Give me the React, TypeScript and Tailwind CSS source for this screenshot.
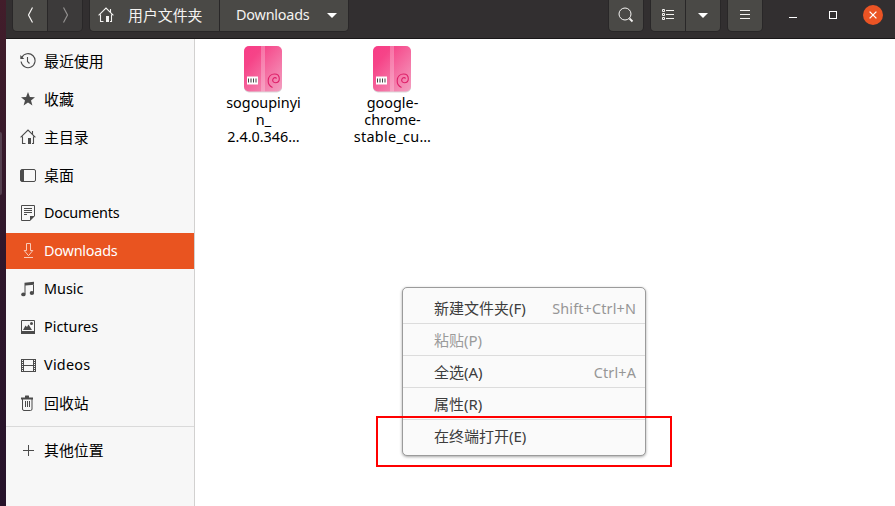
import React from "react";

const font = "font-['Noto_Sans','Noto_Sans_CJK_SC',sans-serif]";

function Svg({ children, className = "" }: { children: React.ReactNode; className?: string }) {
  return (
    <svg width="16" height="16" viewBox="0 0 16 16" fill="none" stroke="currentColor" className={`shrink-0 ${className}`}>
      {children}
    </svg>
  );
}

const HomeIcon = () => (
  <Svg>
    <path d="M.6 8.4 8 1l7.400 7.400M2.500 7.500v7h3M13.500 7.500v7h-1.500M12.500 2v3" strokeWidth="1.100" />
    <path d="M8 9h3v6H8z" fill="currentColor" stroke="none" />
  </Svg>
);
const RecentIcon = () => (
  <Svg>
    <path d="M1.800 4.500A7 7 0 1 1 1.100 8.500M7.500 4v4.500l2 2" strokeWidth="1.100" />
    <path d="M.3 2v4h4z" fill="currentColor" stroke="none" />
  </Svg>
);
const StarIcon = () => (
  <Svg>
    <path d="m8 1 1.900 5 5.100.2-4 3.200 1.400 5L8 11.600l-4.400 2.800 1.400-5-4-3.200L6.100 6z" fill="currentColor" stroke="none" />
  </Svg>
);
const DesktopIcon = () => (
  <Svg>
    <rect x=".5" y="2.500" width="15" height="12" rx="1.500" />
    <path d="M1 3h3v11H1z" fill="currentColor" stroke="none" />
  </Svg>
);
const DocumentIcon = () => (
  <Svg>
    <path d="M10 15.500H1.500v-15h13V11M4 3.500h8M4 5.500h8M4 7.500h8M4 9.500h3" />
    <path d="M10 16v-5h5z" fill="currentColor" stroke="none" />
  </Svg>
);
const DownloadIcon = () => (
  <Svg>
    <path d="M6.500.5h4v7h2.300L8.500 12.700 4.200 7.500h2.300zM4 14.500h9" />
  </Svg>
);
const MusicIcon = () => (
  <Svg>
    <g fill="currentColor" stroke="none">
      <path d="M4.500 1.800 14 .7v3L5.500 4.500V13h-1zM13 2h1v9.500h-1z" />
      <ellipse cx="3.400" cy="13.400" rx="2.200" ry="1.900" />
      <ellipse cx="11.900" cy="12" rx="2.200" ry="1.900" />
    </g>
  </Svg>
);
const PictureIcon = () => (
  <Svg>
    <path d="M1.500 1.500h13v13h-13z" />
    <path d="M1 12h14v3H1zM3 11l2.500-4.500L7 8l1.500-2.500L12 11z" fill="currentColor" stroke="none" />
    <circle cx="11.500" cy="4.500" r="1.500" fill="currentColor" stroke="none" />
  </Svg>
);
const VideoIcon = () => (
  <Svg>
    <path d="M1.500 2v13M3.500 2v13M13.500 2v13M15.500 2v13" />
    <path d="M2.500 2v13M14.500 2v13" strokeDasharray="1 1" />
    <path d="M3.500 2.500h10M3.500 8.500h10M3.500 14.500h10" />
  </Svg>
);
const TrashIcon = () => (
  <Svg>
    <path d="M1 2.500h4V1q0-.5.5-.5h3q.5 0 .5.500v1.500h4v2H1z" fill="currentColor" stroke="none" />
    <path d="M2.500 4v10q0 1.500 1.500 1.500h6.500q1.500 0 1.500-1.500V4M5.500 6v6M7.500 6v6M9.500 6v6" />
  </Svg>
);
const PlusIcon = () => (
  <Svg>
    <path d="M8.500 3v11M3 8.500h11" />
  </Svg>
);
const DownArrow = () => (
  <svg width="10" height="5" viewBox="0 0 10 5" className="shrink-0">
    <path d="M0 0h10L5 5z" fill="#fff" />
  </svg>
);

const places = [
  { label: "最近使用", icon: <RecentIcon /> },
  { label: "收藏", icon: <StarIcon /> },
  { label: "主目录", icon: <HomeIcon /> },
  { label: "桌面", icon: <DesktopIcon /> },
  { label: "Documents", icon: <DocumentIcon /> },
  { label: "Downloads", icon: <DownloadIcon />, active: true },
  { label: "Music", icon: <MusicIcon /> },
  { label: "Pictures", icon: <PictureIcon /> },
  { label: "Videos", icon: <VideoIcon /> },
  { label: "回收站", icon: <TrashIcon /> },
];

const spacing: Record<string, string> = {
  Documents: "tracking-[-0.25px]",
  Downloads: "tracking-[-0.2px]",
  Videos: "tracking-[0.25px]",
};

const headButton = "flex items-center justify-center h-[31px] pb-px";

function Header() {
  return (
    <header className="flex h-[39px] shrink-0 items-start border-b border-[#191718] bg-[#322f30] pl-[7px] text-[#f4f3f1]">
      <div className="flex overflow-hidden rounded-b-[4px] shadow-[0_0_0_1px_#292728]">
        <button className={`${headButton} w-[35px] border-r border-[#292728] bg-[#4a4946]`}>
          <Svg><path d="M10.500.5 6.500 8l4 7.500" strokeWidth="1.200" /></Svg>
        </button>
        <button className={`${headButton} w-[34px] bg-[#3c3a3a] text-[#92908f]`}>
          <Svg><path d="m6.500.5 4 7.500-4 7.500" strokeWidth="1.200" /></Svg>
        </button>
      </div>
      <div className="ml-2 flex overflow-hidden rounded-b-[4px] text-[14.900px] shadow-[0_0_0_1px_#292728]">
        <button className="flex h-[31px] w-[130px] items-center border-r border-[#292728] bg-[#4a4946] pb-px pl-2">
          <HomeIcon />
          <span className="ml-[14px]">用户文件夹</span>
        </button>
        <button className="flex h-[31px] w-[128px] items-center bg-[#4a4946] pb-px pl-4">
          <span className="w-[91px] text-left text-[14.400px] tracking-[-0.2px]">Downloads</span>
          <DownArrow />
        </button>
      </div>
      <div className="ml-auto flex">
        <button className={`${headButton} w-[34px] rounded-b-[4px] bg-[#4a4946] shadow-[0_0_0_1px_#292728]`}>
          <Svg><circle cx="7" cy="7" r="6" /><path d="m11.500 11.500 3 3" strokeWidth="1.800" /></Svg>
        </button>
        <div className="ml-2 flex overflow-hidden rounded-b-[4px] shadow-[0_0_0_1px_#292728]">
          <button className={`${headButton} w-[35px] border-r border-[#292728] bg-[#4a4946]`}>
            <Svg><path d="M2.500 2.500h2v2h-2zM2.500 6.500h2v2h-2zM2.500 10.500h2v2h-2zM6 3.500h8M6 7.500h8M6 11.500h8" /></Svg>
          </button>
          <button className={`${headButton} w-[34px] bg-[#4a4946]`}><DownArrow /></button>
        </div>
        <button className={`${headButton} ml-2 w-[34px] rounded-b-[4px] bg-[#4a4946] shadow-[0_0_0_1px_#292728]`}>
          <Svg><path d="M3 3.500h10M3 7.500h10M3 11.500h10" /></Svg>
        </button>
      </div>
      <div className="flex h-[30px] w-[133px] shrink-0 items-center pl-[27px]">
        <div className="mt-[5px] h-px w-2 bg-white" />
        <div className="ml-8 size-2 border border-white" />
        <div className="ml-[26px] flex size-5 items-center justify-center rounded-full bg-[#eb5424] text-white">
          <svg width="8" height="8" viewBox="0 0 8 8"><path d="m.6.6 6.800 6.800m0-6.800L.6 7.400" stroke="currentColor" strokeWidth="1.300" /></svg>
        </div>
      </div>
    </header>
  );
}

function Sidebar() {
  return (
    <aside className="w-[189px] shrink-0 border-r border-[#d2d1d0] bg-[#f7f7f7] pt-[4px] text-[14.900px] text-black">
      <ul className="flex flex-col gap-[2px]">
        {places.map((p) => (
          <li key={p.label} className={`flex h-[36px] items-center pl-[14px] ${p.active ? "bg-[#e95420] text-white" : ""}`}>
            <span className={p.active ? "text-[#f8cbb9]" : "text-[#4b4b4b]"}>{p.icon}</span>
            <span className={`ml-2 ${/[A-Z]/.test(p.label) ? "text-[14.400px]" : ""} ${spacing[p.label] ?? ""}`}>{p.label}</span>
          </li>
        ))}
      </ul>
      <div className="mt-[5px] h-px bg-[#dadada]" />
      <div className="mt-[5px] flex h-[36px] items-center pl-[14px]">
        <span className="text-[#4b4b4b]"><PlusIcon /></span>
        <span className="ml-2">其他位置</span>
      </div>
    </aside>
  );
}

function PackageFile({ lines }: { lines: string[] }) {
  return (
    <div className="flex w-[129px] flex-col items-center">
      <svg width="40" height="48" viewBox="0 0 40 48" className="-ml-[2px]">
        <defs>
          <linearGradient id="box" x1="0" y1="0" x2="1" y2="1">
            <stop offset="0" stopColor="#f83c86" />
            <stop offset=".25" stopColor="#f64488" />
            <stop offset="1" stopColor="#f3a0c1" />
          </linearGradient>
        </defs>
        <rect x="1" y="2" width="38" height="45.500" rx="5" fill="#000" opacity=".15" />
        <rect x="1" y="1" width="38" height="45.500" rx="5" fill="url(#box)" />
        <path d="M18 1h4v45.500h-4z" fill="#fff" opacity=".25" />
        <path d="M4 31.500h11v8H4z" fill="#fff" />
        <path d="M5.500 33.500v4M10.500 33.500v4M13 33.500v4" stroke="#444" />
        <path d="M8 33.500v4" stroke="#777" strokeWidth="1.500" />
        <path d="M29.500 42.500c-3-1.500-4.500-4-4.300-7 .3-4 3-6.500 6.300-6.500 3 0 4.800 2 4.800 4.800s-2 4-4 4-3.300-2-2.300-3.800 2.800-1.800 3.600-.5" fill="none" stroke="#de2069" strokeWidth="1.100" />
      </svg>
      <p className="mt-px text-center text-[14.400px] leading-[17px] text-black">
        {lines.map((l) => (
          <span key={l} className={`block whitespace-nowrap ${l.startsWith("stable") ? "tracking-[0.3px]" : ""}`}>{l}</span>
        ))}
      </p>
    </div>
  );
}

const menu = [
  { label: "新建文件夹(F)", keys: "Shift+Ctrl+N" },
  { label: "粘贴(P)", disabled: true },
  { label: "全选(A)", keys: "Ctrl+A" },
  { label: "属性(R)" },
  { label: "在终端打开(E)" },
];

function ContextMenu() {
  return (
    <div className="absolute left-[402px] top-[287px] h-[169px] w-[244px] rounded-[5px] border border-[#9b9b9b] bg-[#fafafa] py-1 text-[15px] shadow-[0_1px_3px_rgba(0,0,0,0.35)]">
      {menu.map((m) => (
        <div key={m.label} className="flex h-8 items-center justify-between border-b border-[#dcdcdc] pl-[31px] pr-[9px] pt-px last:border-transparent">
          <span className={m.disabled ? "text-[#9b9b9b]" : "text-[#3d3d3d]"}>{m.label}</span>
          {m.keys && <span className="pt-px text-[14.400px] tracking-[0.150px] text-[#969696]">{m.keys}</span>}
        </div>
      ))}
    </div>
  );
}

export default function App() {
  return (
    <div className={`relative flex h-[506px] w-[895px] overflow-hidden bg-white ${font}`}>
      <div className="w-[6px] shrink-0 bg-linear-to-b from-[#421d2a] via-[#2f172b] to-[#26132a] pt-[132px]">
        <div className="h-[63px] w-[2px] rounded-r bg-[#54404f]" />
      </div>
      <div className="flex min-w-0 flex-1 flex-col">
        <Header />
        <div className="flex flex-1">
          <Sidebar />
          <main className="flex flex-1 bg-white pl-[4px] pt-[6px]">
            <PackageFile lines={["sogoupinyi", "n_", "2.4.0.346…"]} />
            <PackageFile lines={["google-", "chrome-", "stable_cu…"]} />
          </main>
        </div>
      </div>
      <ContextMenu />
      <div className="absolute left-[376px] top-[416px] h-[51px] w-[296px] border-2 border-[#ff0000]" />
    </div>
  );
}
